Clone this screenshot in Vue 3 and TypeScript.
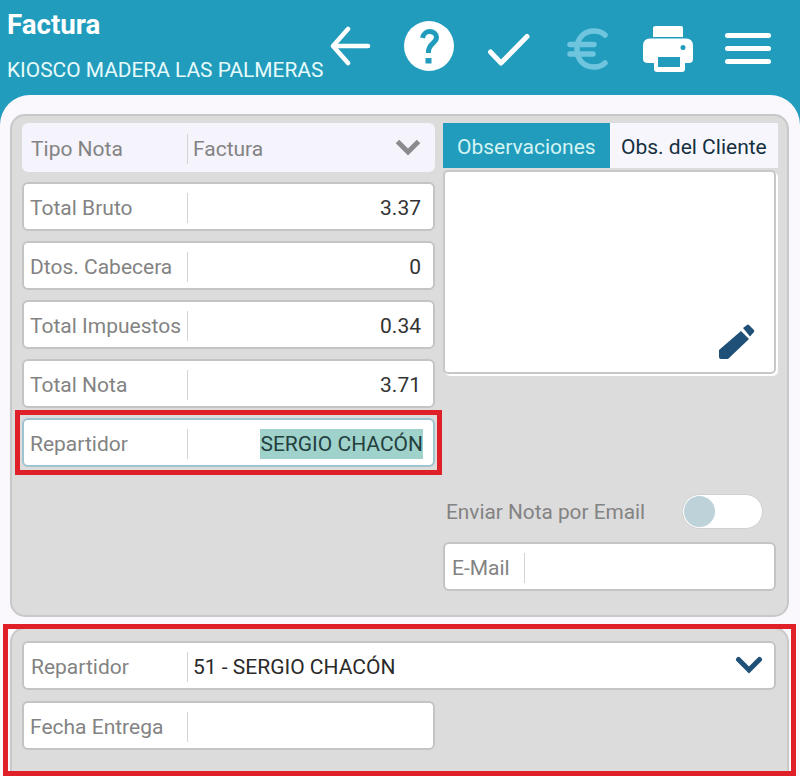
<script setup lang="ts">
const totals = [
  { label: 'Total Bruto', value: '3.37' },
  { label: 'Dtos. Cabecera', value: '0' },
  { label: 'Total Impuestos', value: '0.34' },
  { label: 'Total Nota', value: '3.71' },
];
</script>

<template>
  <div class="page">
    <header class="topbar">
      <div class="titles">
        <div class="title">Factura</div>
        <div class="subtitle">KIOSCO MADERA LAS PALMERAS</div>
      </div>
      <svg class="icons" width="470" height="95" viewBox="330 0 470 95">
        <!-- back -->
        <path d="M368 46H333M348 29L333 46L348 63" fill="none" stroke="#fff" stroke-width="4.5" stroke-linecap="round" stroke-linejoin="round" />
        <!-- help -->
        <circle cx="429" cy="46" r="25" fill="#fff" />
        <path d="M422.500 38C423.500 33 427 31.500 429.500 31.500C433.500 31.500 436.500 34 436.500 37.500C436.500 43 428.500 43.500 428.500 51.500V53" fill="none" stroke="#229cbc" stroke-width="5" />
        <rect x="425.500" y="58" width="6" height="5.500" fill="#229cbc" />
        <!-- check -->
        <path d="M490.500 52L501 63L527 36.500" fill="none" stroke="#fff" stroke-width="5" stroke-linecap="round" stroke-linejoin="round" />
        <!-- euro -->
        <path d="M605 35C601 31 597 31 594 31C584 31 577 38 577 49C577 60 584 67 594 67C597 67 601 67 605 63M570 44.500H594M570 54H593" fill="none" stroke="#6fc5dd" stroke-width="5.500" stroke-linecap="round" />
        <!-- print -->
        <path d="M656 26H681Q683 26 683 28V37H653V28Q653 26 656 26ZM650 38.500H686Q693 38.500 693 46V59Q693 63 689 63H685V69Q685 72 682 72H657Q654 72 654 69V63H648Q643 63 643 59V46Q643 38.500 650 38.500Z" fill="#fff" />
        <rect x="658" y="57" width="22" height="10" fill="#229cbc" />
        <circle cx="683" cy="47.500" r="2.500" fill="#229cbc" />
        <!-- menu -->
        <rect x="725" y="33" width="46" height="5" rx="2.500" fill="#fff" />
        <rect x="725" y="46" width="46" height="5" rx="2.500" fill="#fff" />
        <rect x="725" y="59" width="46" height="5" rx="2.500" fill="#fff" />
      </svg>
    </header>

    <main class="panel">
      <section class="card main-card">
        <div class="col-left">
          <div class="field field-select">
            <span class="label">Tipo Nota</span>
            <span class="value muted">Factura</span>
            <svg class="chevron" width="28" height="18" viewBox="0 0 28 18">
              <path d="M3.500 3.500L14 14L24.500 3.500" fill="none" stroke="#8b8a8c" stroke-width="5" />
            </svg>
          </div>
          <div v-for="item in totals" :key="item.label" class="field">
            <span class="label">{{ item.label }}</span>
            <span class="value right">{{ item.value }}</span>
          </div>
          <div class="field field-focus">
            <span class="label">Repartidor</span>
            <span class="value right"><span class="selected">SERGIO CHACÓN</span></span>
          </div>
        </div>

        <div class="col-right">
          <div class="tabs">
            <div class="tab active">Observaciones</div>
            <div class="tab">Obs. del Cliente</div>
          </div>
          <div class="notes">
            <svg class="pencil" width="38" height="38" viewBox="719 324 38 38">
              <path fill="#1f5078" d="M720 351L742 332L750 340L729 360H722Q720 360 720 358Z" />
              <path fill="#1f5078" d="M744 329L748 326Q749 325 750 326L755 331Q755.500 332 755 333L751 337.500Z" />
            </svg>
          </div>
          <div class="email-row">
            <span class="email-label">Enviar Nota por Email</span>
            <div class="toggle"><div class="knob"></div></div>
          </div>
          <div class="field field-email">
            <span class="label">E-Mail</span>
            <span class="value"></span>
          </div>
        </div>
      </section>

      <section class="card delivery-card">
        <div class="field field-wide">
          <span class="label">Repartidor</span>
          <span class="value dark">51 - SERGIO CHACÓN</span>
          <svg class="chevron" width="28" height="18" viewBox="0 0 28 18">
            <path d="M3.500 3.500L14 14L24.500 3.500" fill="none" stroke="#1f5078" stroke-width="5" stroke-linecap="round" />
          </svg>
        </div>
        <div class="field field-half">
          <span class="label">Fecha Entrega</span>
          <span class="value"></span>
        </div>
      </section>
    </main>

    <div class="mark mark-field"></div>
    <div class="mark mark-card"></div>
  </div>
</template>

<style>
html,
body {
  margin: 0;
}
</style>

<style scoped>
.page {
  position: relative;
  width: 800px;
  height: 776px;
  overflow: hidden;
  background: #229cbc;
  font-family: Roboto, "Liberation Sans", sans-serif;
}

.topbar {
  position: relative;
  height: 95px;
  padding: 9px 0 0 7px;
  box-sizing: border-box;
  color: #fff;
}

.title {
  font-size: 27.700px;
  font-weight: 700;
  line-height: 32px;
}

.subtitle {
  margin-top: 17px;
  font-size: 20.900px;
  line-height: 24px;
  color: #e6fbfb;
}

.icons {
  position: absolute;
  top: 0;
  left: 330px;
}

.panel {
  height: 681px;
  padding: 19px 11px 0 10px;
  box-sizing: border-box;
  background: #faf8fd;
  border-radius: 30px 30px 0 0;
}

.card {
  box-sizing: border-box;
  background: #dcdcdc;
  border: 2px solid #c8c8c8;
  border-radius: 15px;
}

.main-card {
  display: grid;
  grid-template-columns: 413px 333px;
  gap: 8px;
  height: 503px;
  padding: 7px 11px 0 10px;
}

.col-left {
  display: flex;
  flex-direction: column;
  gap: 10px;
}

.field {
  display: flex;
  align-items: center;
  height: 49px;
  padding-top: 2px;
  box-sizing: border-box;
  flex-shrink: 0;
  background: #fff;
  border: 2px solid #c4c4c4;
  border-radius: 6px;
  font-size: 21px;
}

.label {
  width: 157px;
  padding-left: 6px;
  flex-shrink: 0;
  color: #838383;
  white-space: nowrap;
}

.value {
  flex: 1;
  height: 30px;
  padding: 0 12px 0 5px;
  border-left: 1px solid #d4d4d4;
  line-height: 30px;
  color: #333;
  white-space: nowrap;
}

.right {
  text-align: right;
}

.muted {
  color: #838383;
}

.dark {
  color: #2a2a2a;
}

.field-select {
  position: relative;
  background: #f5f3fc;
  border-color: #f5f3fc;
}

.field-select .label,
.field-wide .label {
  width: 156px;
  padding-left: 7px;
}

.field-focus {
  border-color: #9fc3cf;
}

.field-focus .value {
  padding-right: 10px;
}

.selected {
  display: inline-block;
  background: #9fd2cb;
  color: #24403f;
}

.chevron {
  position: absolute;
  right: 11px;
  top: 13px;
}

.col-right {
  display: flex;
  flex-direction: column;
}

.tabs {
  display: flex;
  height: 45px;
  background: #f8f6fd;
  margin-right: -2px;
  font-size: 21px;
}

.tab {
  display: flex;
  align-items: center;
  padding: 2px 11px 0;
  color: #14303f;
  white-space: nowrap;
}

.tab.active {
  width: 167px;
  box-sizing: border-box;
  padding: 2px 14px 0;
  background: #229cbc;
  color: #d4f4f4;
}

.notes {
  position: relative;
  height: 204px;
  margin-top: 2px;
  box-sizing: border-box;
  background: #fff;
  border: 2px solid #c8c8c8;
  border-radius: 5px;
  box-shadow: 2px 2px 0 #fff;
}

.pencil {
  position: absolute;
  right: 18px;
  bottom: 11px;
}

.email-row {
  display: flex;
  align-items: center;
  justify-content: space-between;
  height: 36px;
  margin-top: 119px;
  padding: 0 13px 0 3px;
}

.email-label {
  padding-top: 2px;
  font-size: 20.800px;
  color: #838383;
}

.toggle {
  width: 81px;
  height: 35px;
  box-sizing: border-box;
  padding: 1px;
  background: #fff;
  border: 1px solid #d0d0d0;
  border-radius: 18px;
}

.knob {
  width: 31px;
  height: 31px;
  border-radius: 50%;
  background: #bdd2d9;
}

.field-email {
  margin-top: 13px;
  padding-top: 3px;
}

.field-email .label {
  width: 72px;
  padding-left: 7px;
}

.delivery-card {
  height: 200px;
  margin-top: 10px;
  padding: 12px 11px 0 10px;
}

.field-wide {
  position: relative;
  width: 754px;
}

.field-half {
  width: 413px;
  margin-top: 11px;
}

.mark {
  position: absolute;
  box-sizing: border-box;
  border: 5px solid #df2029;
  pointer-events: none;
}

.mark-field {
  left: 15px;
  top: 410px;
  width: 427px;
  height: 65px;
}

.mark-card {
  left: 3px;
  top: 624px;
  width: 793px;
  height: 152px;
}
</style>
